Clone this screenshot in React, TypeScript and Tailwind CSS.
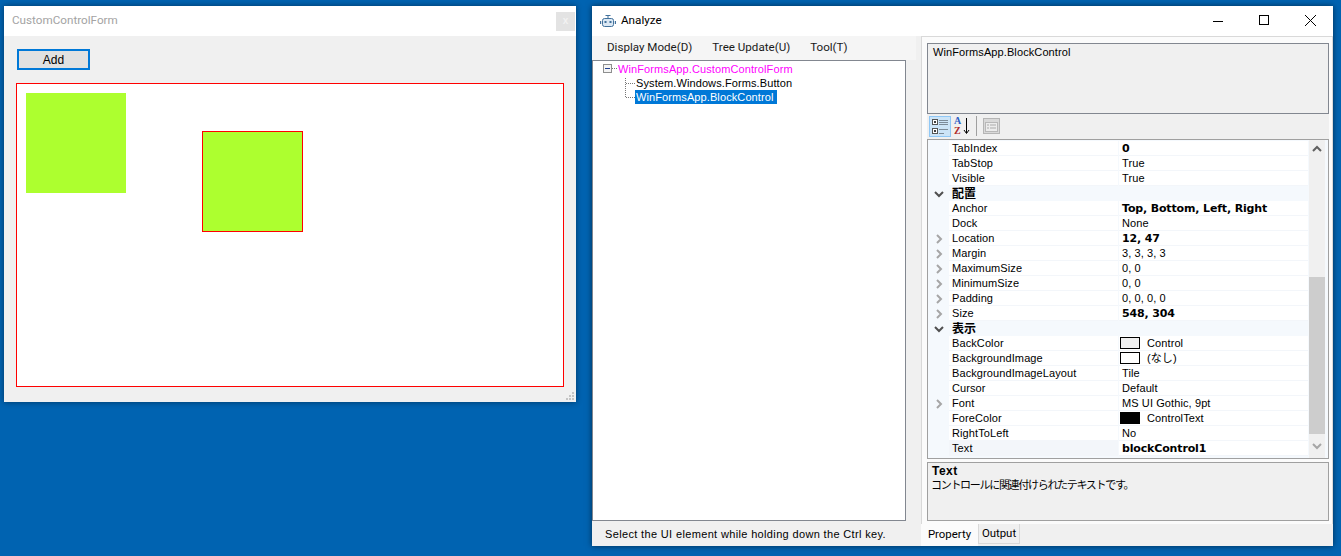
const rows = [
  { name: "TabIndex", value: "0", bold: true },
  { name: "TabStop", value: "True" },
  { name: "Visible", value: "True" },
  { category: "配置" },
  { name: "Anchor", value: "Top, Bottom, Left, Right", bold: true },
  { name: "Dock", value: "None" },
  { name: "Location", value: "12, 47", bold: true, expand: true },
  { name: "Margin", value: "3, 3, 3, 3", expand: true },
  { name: "MaximumSize", value: "0, 0", expand: true },
  { name: "MinimumSize", value: "0, 0", expand: true },
  { name: "Padding", value: "0, 0, 0, 0", expand: true },
  { name: "Size", value: "548, 304", bold: true, expand: true },
  { category: "表示" },
  { name: "BackColor", value: "Control", swatch: "bg-[#f0f0f0]" },
  { name: "BackgroundImage", value: "(なし)", swatch: "bg-white" },
  { name: "BackgroundImageLayout", value: "Tile" },
  { name: "Cursor", value: "Default" },
  { name: "Font", value: "MS UI Gothic, 9pt", expand: true },
  { name: "ForeColor", value: "ControlText", swatch: "bg-black" },
  { name: "RightToLeft", value: "No" },
  { name: "Text", value: "blockControl1", bold: true, selected: true },
];

type Row = {
  name?: string;
  value?: string;
  category?: string;
  bold?: boolean;
  expand?: boolean;
  swatch?: string;
  selected?: boolean;
};

function Chevron({ down, className }: { down?: boolean; className: string }) {
  return (
    <svg width="10" height="10" viewBox="0 0 10 10" fill="none" className={className}>
      <path
        d={down ? "M1 3l4 4 4-4" : "M3 1l4 4-4 4"}
        stroke="currentColor"
        strokeWidth="2"
      />
    </svg>
  );
}

function GridRow({ row }: { row: Row }) {
  if (row.category) {
    return (
      <div className="flex h-[15px] items-center bg-[#f5f9fd] text-black">
        <div className="flex w-[21px] justify-center">
          <Chevron down className="text-[#505050]" />
        </div>
        <span className="pl-[3px] text-[12px] font-bold">{row.category}</span>
      </div>
    );
  }
  return (
    <div className="flex h-[15px] bg-[#f5f9fd]">
      <div className="flex w-[21px] items-center justify-center">
        {row.expand && <Chevron className="text-[#a6a6a6]" />}
      </div>
      <div
        className={`flex w-[169px] items-center border-b border-[#f3f6fa] pl-[3px] ${
          row.selected ? "bg-[#f3f6fa]" : "bg-white"
        }`}
      >
        {row.name}
      </div>
      <div className="ml-px flex w-[189px] items-center border-b border-[#f3f6fa] bg-white pl-[3px]">
        {row.swatch && (
          <span className={`-ml-[2px] mr-[7px] h-[12px] w-[20px] border border-black ${row.swatch}`} />
        )}
        <span className={row.bold ? "font-['DejaVu_Sans','Noto_Sans_CJK_JP',sans-serif] text-[11px] font-bold tracking-[-0.15px]" : ""}>
          {row.value}
        </span>
      </div>
    </div>
  );
}

function CategorizedIcon() {
  return (
    <svg width="20" height="19" viewBox="0 0 20 19">
      <rect x="2.5" y="2.5" width="5" height="5" fill="#fff" stroke="#555" />
      <rect x="2.5" y="11.5" width="5" height="5" fill="#fff" stroke="#555" />
      <path d="M4 5h2M5 4v2M4 14h2M5 13v2" stroke="#000" />
      <path d="M9 3.5h9M9 5.5h9M9 7.5h9M9 12.5h9M9 16.5h5" stroke="#7c8b99" />
    </svg>
  );
}

function PropertyPagesIcon() {
  return (
    <svg width="17" height="16" viewBox="0 0 17 16">
      <rect x="0.5" y="0.5" width="16" height="15" fill="#d9d9d9" stroke="#b5b5b5" />
      <rect x="2.5" y="4.5" width="12" height="9" fill="#ececec" stroke="#b8b8b8" />
      <path d="M4 7h2M7 7h6M4 10h2M7 10h6" stroke="#aaa" />
    </svg>
  );
}

function RobotIcon() {
  return (
    <svg width="16" height="13" viewBox="0 0 16 13" fill="none" stroke="#41719c">
      <path d="M8 0.5v2.5M5.5 0.5h5" />
      <rect x="2.5" y="3.5" width="11" height="8" rx="2" fill="#dbe8f4" />
      <path d="M0.5 6v3M15.5 6v3" strokeWidth="1.4" />
      <rect x="4.5" y="6" width="2" height="2" fill="#41719c" stroke="none" />
      <rect x="9.5" y="6" width="2" height="2" fill="#41719c" stroke="none" />
    </svg>
  );
}

export default function App() {
  return (
    <div className="flex h-[556px] w-[1341px] items-start gap-4 overflow-hidden bg-[#0063b1] pl-1 pt-[6px] font-['Liberation_Sans','Noto_Sans_CJK_JP',sans-serif] text-[11px] leading-none tracking-[0.1px] text-black">
      {/* CustomControlForm */}
      <div className="flex h-[396px] w-[572px] flex-col bg-[#f0f0f0] shadow-[0_0_6px_rgba(0,0,0,0.45)]">
        <div className="flex h-[30px] items-center justify-between bg-white pl-2 pr-px">
          <span className="font-['Roboto',sans-serif] text-[11.7px] tracking-normal text-[#a3a3a3]">CustomControlForm</span>
          <div className="flex h-[19px] w-[19px] items-center justify-center bg-[#e3e3e3] text-[10px] font-bold text-[#f2f2f2]">
            x
          </div>
        </div>
        <div className="relative flex flex-1 flex-col pl-3 pr-3 pt-[13px]">
          <button className="ml-px h-[21px] w-[73px] border-2 border-[#0078d7] bg-[#e1e1e1] text-[12px] text-black">
            Add
          </button>
          <div className="relative mt-[13px] h-[304px] w-[548px] border border-[#ff0000] bg-white">
            <div className="absolute left-[9px] top-[9px] h-[100px] w-[100px] bg-[#adff2f]" />
            <div className="absolute left-[185px] top-[47px] h-[101px] w-[101px] border border-[#ff0000] bg-[#adff2f]" />
          </div>
          <svg width="10" height="10" viewBox="0 0 10 10" className="absolute bottom-[1px] right-[1px]" fill="#c4c4c4">
            <rect x="7" y="1" width="2" height="2" />
            <rect x="4" y="4" width="2" height="2" />
            <rect x="7" y="4" width="2" height="2" />
            <rect x="1" y="7" width="2" height="2" />
            <rect x="4" y="7" width="2" height="2" />
            <rect x="7" y="7" width="2" height="2" />
          </svg>
        </div>
      </div>

      {/* Analyze */}
      <div className="flex h-[540px] w-[741px] flex-col bg-[#f0f0f0] shadow-[0_0_6px_rgba(0,0,0,0.55)]">
        <div className="flex h-[30px] items-center bg-white pl-2">
          <RobotIcon />
          <span className="ml-[5px] font-['Roboto',sans-serif] text-[11.7px] tracking-normal">Analyze</span>
          <div className="ml-auto flex items-center">
            <svg width="46" height="30" viewBox="0 0 46 30" fill="none" stroke="#000">
              <path d="M18 15.5h10" />
            </svg>
            <svg width="46" height="30" viewBox="0 0 46 30" fill="none" stroke="#000">
              <rect x="18.5" y="9.5" width="9" height="9" />
            </svg>
            <svg width="46" height="30" viewBox="0 0 46 30" fill="none" stroke="#000">
              <path d="M18 9l11 11M29 9L18 20" />
            </svg>
          </div>
        </div>
        <div className="flex flex-1">
          {/* left pane */}
          <div className="flex w-[329px] flex-col">
            <div className="mr-[5px] flex h-[24px] items-center gap-[20px] bg-[#f5f5f5] pl-[15px] font-['Roboto',sans-serif] text-[11.6px] tracking-normal text-[#1a1a1a]">
              <span>Display Mode(D)</span>
              <span>Tree Update(U)</span>
              <span>Tool(T)</span>
            </div>
            <div className="h-[461px] w-[314px] border border-[#828790] bg-white pt-px">
              <div className="flex h-[14px] items-center pl-[10px]">
                <svg width="15" height="14" viewBox="0 0 15 14" fill="none">
                  <rect x="0.5" y="2.5" width="8" height="8" fill="#f4f4f4" stroke="#8e8f8f" />
                  <path d="M2 6.5h5" stroke="#1f3f8f" />
                  <path d="M9 6.5h5" stroke="#777" strokeDasharray="1 1" />
                </svg>
                <span className="text-[#ff00ff]">WinFormsApp.CustomControlForm</span>
              </div>
              <div className="flex h-[14px] items-center pl-[32px]">
                <svg width="10" height="14" viewBox="0 0 10 14" fill="none" stroke="#777" strokeDasharray="1 1">
                  <path d="M0.5 2v12M1 7.5h9" />
                </svg>
                <span className="pl-px">System.Windows.Forms.Button</span>
              </div>
              <div className="flex h-[14px] items-center pl-[32px]">
                <svg width="10" height="14" viewBox="0 0 10 14" fill="none" stroke="#777" strokeDasharray="1 1">
                  <path d="M0.5 0v7.5M1 7.5h9" />
                </svg>
                <span className="flex h-[14px] w-[142px] items-center bg-[#0078d7] pl-px text-white">
                  WinFormsApp.BlockControl
                </span>
              </div>
            </div>
            <div className="flex flex-1 items-center pl-[13px] pt-px tracking-[0.35px]">
              Select the UI element while holding down the Ctrl key.
            </div>
          </div>

          {/* right pane */}
          <div className="flex flex-1 flex-col">
            <div className="h-[488px] border-x border-t border-[#d9d9d9] bg-[#fbfbfb] pl-[5px] pr-[3px] pt-[6px]">
              <div className="h-[71px] border border-[#828790] bg-[#f0f0f0] pl-[5px] pt-[3px]">
                WinFormsApp.BlockControl
              </div>
              <div className="flex h-[25px] items-center bg-[#f0f0f0] pb-px pl-[2px]">
                <div className="h-[21px] w-[22px] border border-[#90c8f6] bg-[#cce4f7]">
                  <CategorizedIcon />
                </div>
                <div className="relative ml-px flex h-[21px] w-[20px] flex-col items-start pl-[2px] font-['Liberation_Serif',serif] text-[10px] font-bold leading-[10px]">
                  <span className="text-[#2f5fc4]">A</span>
                  <span className="text-[#b02a2a]">Z</span>
                  <svg width="7" height="17" viewBox="0 0 7 17" className="absolute right-[2px] top-[2px]" fill="none" stroke="#000">
                    <path d="M3.5 0v15M1 12l2.5 3.5L6 12" />
                  </svg>
                </div>
                <div className="ml-[4px] h-[20px] w-px bg-[#a0a0a0]" />
                <div className="ml-[6px]">
                  <PropertyPagesIcon />
                </div>
              </div>
              <div className="flex h-[320px] border border-[#a0a0a0] bg-[#f5f9fd]">
                <div className="w-[381px] pt-px">
                  {rows.map((row, i) => (
                    <GridRow key={i} row={row} />
                  ))}
                </div>
                <div className="flex w-[16px] flex-col bg-[#f0f0f0]">
                  <div className="flex h-[17px] items-center justify-center">
                    <Chevron down={false} className="-rotate-90 text-[#606060]" />
                  </div>
                  <div className="mt-[120px] h-[157px] bg-[#cdcdcd]" />
                  <div className="flex flex-1 items-center justify-center">
                    <Chevron className="rotate-90 text-[#a6a6a6]" />
                  </div>
                </div>
              </div>
              <div className="mt-[3px] h-[59px] border border-[#a0a0a0] bg-[#f0f0f0] pl-[4px] pt-[2px]">
                <div className="text-[12px] font-bold tracking-[0.5px]">Text</div>
                <div className="mt-[3px] -ml-px text-[11px] tracking-[-1.3px]">
                  コントロールに関連付けられたテキストです。
                </div>
              </div>
            </div>
            <div className="flex flex-1 items-start font-['Roboto',sans-serif] text-[11.4px] tracking-normal">
              <div className="flex h-[22px] w-[57px] items-center justify-center bg-[#fbfbfb]">
                Property
              </div>
              <div className="flex h-[20px] w-[42px] items-center justify-center border-x border-b border-[#d9d9d9]">
                Output
              </div>
            </div>
          </div>
        </div>
      </div>
    </div>
  );
}
